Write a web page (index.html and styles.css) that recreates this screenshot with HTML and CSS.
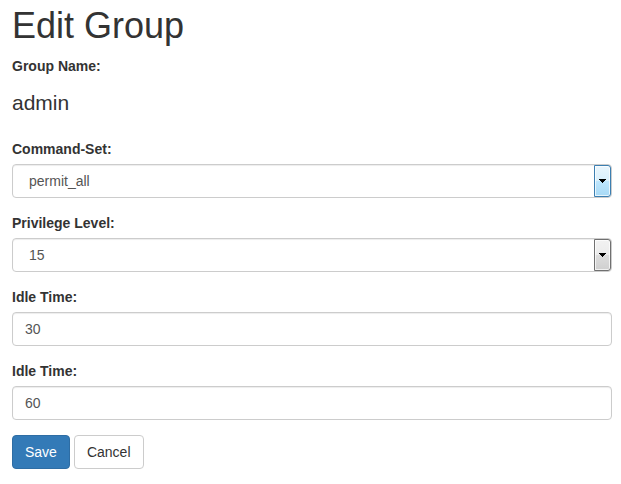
FILE: index.html
```html
<!DOCTYPE html>
<html lang="en">
<head>
<meta charset="utf-8">
<meta name="viewport" content="width=device-width, initial-scale=1">
<title>Edit Group</title>
<link rel="stylesheet" href="styles.css">
</head>
<body>
<main class="page">
  <h1 class="title">Edit Group</h1>
  <form>
    <div class="group">
      <label class="label" for="name">Group Name:</label>
      <output class="static" id="name">admin</output>
    </div>
    <div class="group">
      <label class="label" for="command-set">Command-Set:</label>
      <div class="select">
        <select class="control select-control" id="command-set"><option>permit_all</option></select>
        <span class="arrow arrow-active"><svg width="8" height="4" viewBox="0 0 8 4" shape-rendering="crispEdges"><path d="M0 0h7v1H0zM1 1h5v1H1zM2 2h3v1H2zM3 3h1v1H3z"/></svg></span>
      </div>
    </div>
    <div class="group">
      <label class="label" for="privilege">Privilege Level:</label>
      <div class="select">
        <select class="control select-control" id="privilege"><option>15</option></select>
        <span class="arrow"><svg width="8" height="4" viewBox="0 0 8 4" shape-rendering="crispEdges"><path d="M0 0h7v1H0zM1 1h5v1H1zM2 2h3v1H2zM3 3h1v1H3z"/></svg></span>
      </div>
    </div>
    <div class="group">
      <label class="label" for="idle-1">Idle Time:</label>
      <input class="control" id="idle-1" type="text" value="30">
    </div>
    <div class="group">
      <label class="label" for="idle-2">Idle Time:</label>
      <input class="control" id="idle-2" type="text" value="60">
    </div>
    <div class="actions">
      <button class="btn btn-primary" type="submit">Save</button>
      <button class="btn" type="button">Cancel</button>
    </div>
  </form>
</main>
</body>
</html>
```
FILE: styles.css
```css
* {
  box-sizing: border-box;
}

body {
  margin: 0;
  background: #fff;
  color: #333;
  font: 14px/20px "Liberation Sans", Arial, sans-serif;
}

.page {
  padding: 6px 9px 15px 12px;
}

.title {
  margin: 0 0 10px;
  font-size: 36px;
  font-weight: 400;
  line-height: 40px;
}

.group {
  margin-bottom: 15px;
}

.label {
  display: block;
  margin-bottom: 5px;
  font-weight: 700;
}

.static {
  display: block;
  padding: 7px 0;
  font-size: 21px;
  line-height: 29px;
}

.control {
  display: block;
  width: 100%;
  height: 34px;
  padding: 6px 12px;
  border: 1px solid #ccc;
  border-radius: 4px;
  background: #fff;
  box-shadow: inset 0 1px 1px rgba(0, 0, 0, 0.075);
  color: #555;
  font: inherit;
}

.select {
  position: relative;
}

.select-control {
  appearance: none;
  padding: 6px 32px 6px 16px;
}

.arrow {
  position: absolute;
  top: 1px;
  right: 1px;
  bottom: 1px;
  display: flex;
  align-items: center;
  justify-content: center;
  width: 17px;
  border: 1px solid #707070;
  border-radius: 0 3px 3px 0;
  background: linear-gradient(#f2f2f2, #ebebeb 50%, #dddddd 50%, #cfcfcf);
  box-shadow: inset 0 0 0 1px rgba(255, 255, 255, 0.7);
  pointer-events: none;
}

.arrow-active {
  border-color: #3c7fb1;
  background: linear-gradient(#eaf6fd, #d9f0fc 50%, #bee6fd 50%, #a7d9f5);
}

.actions {
  display: flex;
  gap: 4px;
}

.btn {
  padding: 6px 12px;
  border: 1px solid #ccc;
  border-radius: 4px;
  background: #fff;
  color: #333;
  font: inherit;
}

.btn-primary {
  border-color: #2e6da4;
  background: #337ab7;
  color: #fff;
}
```
